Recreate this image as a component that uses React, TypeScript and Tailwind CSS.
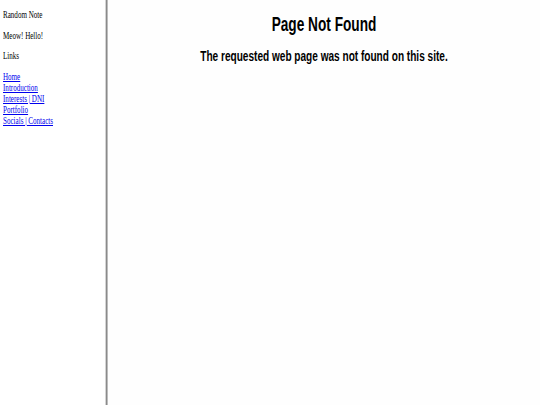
export default function App() {
  const links = ["Home", "Introduction", "Interests | DNI", "Portfolio", "Socials | Contacts"];
  return (
    <div className="flex h-[405px] w-[540px] bg-white overflow-hidden">
      {/* nav frame */}
      <div className="w-[105px] shrink-0 pl-[3px] pt-[10px] font-['Liberation_Serif',serif] text-[9.8px] leading-[10.9px] text-black">
        <div className="origin-left scale-x-[0.72] w-[140px]">
          <p className="mb-[9.8px]">Random Note</p>
          <p className="mb-[9.8px]">Meow! Hello!</p>
          <p className="mb-[9.8px]">Links</p>
          <div className="flex flex-col">
            {links.map((l) => (
              <a key={l} href="#" className="text-[#0000ee] underline">
                {l}
              </a>
            ))}
          </div>
        </div>
      </div>
      {/* frame border */}
      <div className="flex w-[3px] shrink-0">
        <div className="w-px bg-[#d4d4d4]" />
        <div className="w-px bg-[#8a8a8a]" />
        <div className="w-px bg-[#bdbdbd]" />
      </div>
      {/* content frame */}
      <div className="flex-1 bg-[#fefefe] pt-[12px] text-center font-['Liberation_Sans',Arial,sans-serif] font-bold text-black">
        <h1 className="text-[21px] leading-[24px] scale-x-[0.65]">Page Not Found</h1>
        <h2 className="mt-[11px] text-[15.5px] leading-[18px] scale-x-[0.65]">
          The requested web page was not found on this site.
        </h2>
      </div>
    </div>
  );
}
